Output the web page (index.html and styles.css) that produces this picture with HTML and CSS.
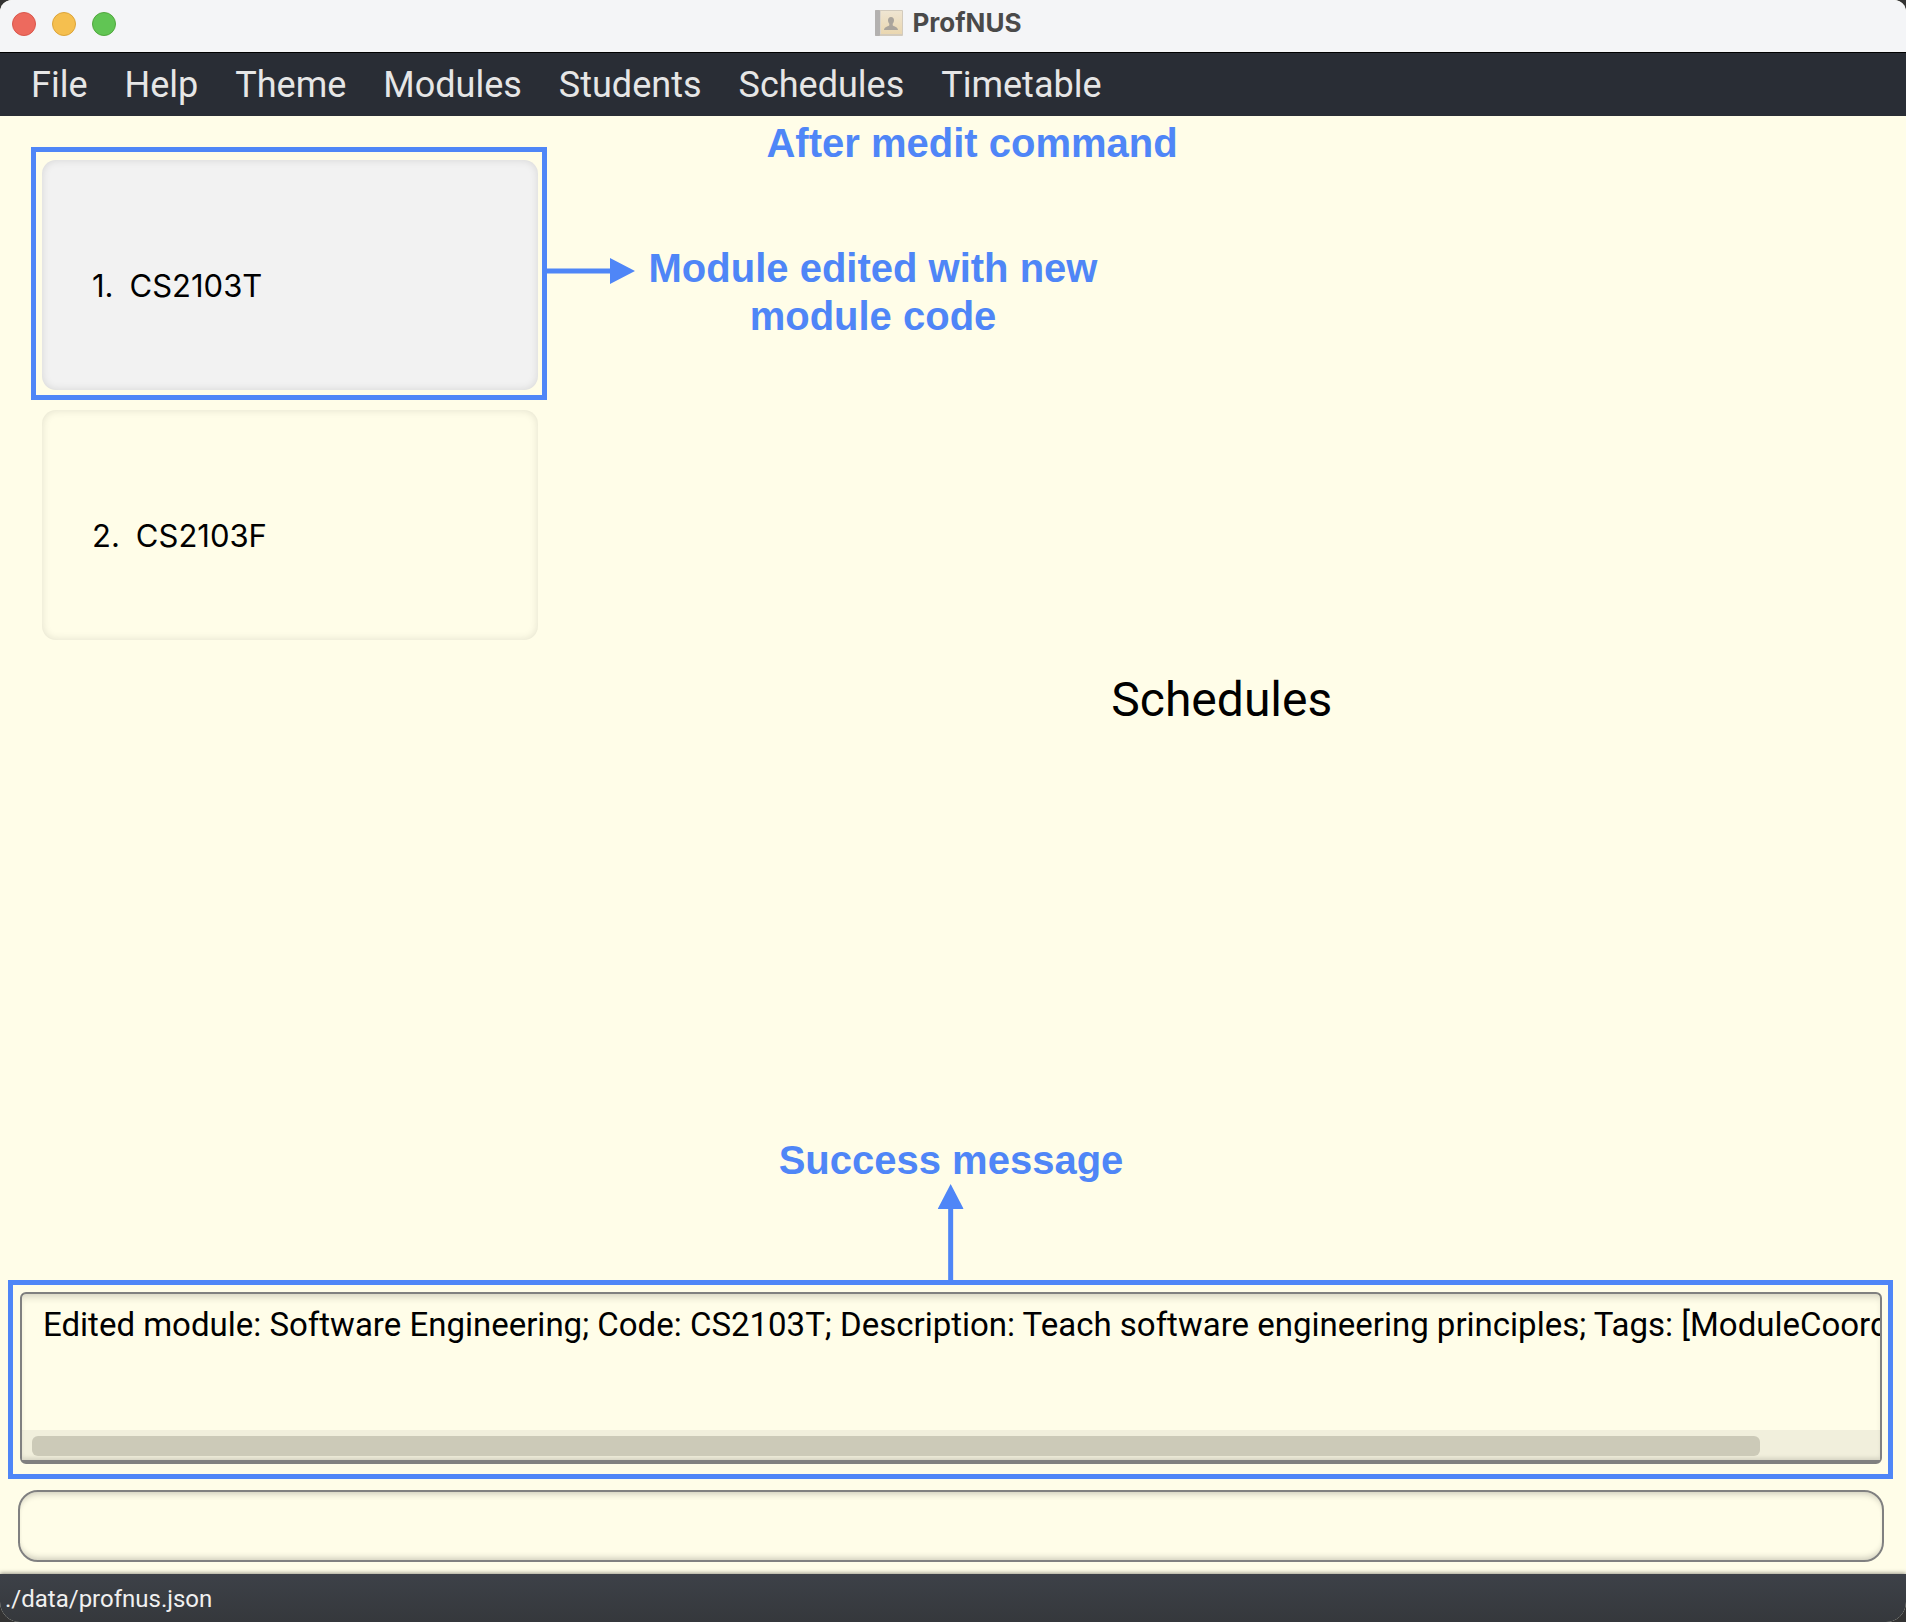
FILE: index.html
```html
<!DOCTYPE html>
<html lang="en">
<head>
<meta charset="utf-8">
<meta name="viewport" content="width=device-width, initial-scale=1">
<title>ProfNUS</title>
<link rel="stylesheet" href="styles.css">
</head>
<body>
<div class="window">
  <header class="titlebar">
    <div class="lights">
      <button class="light light-close" type="button" aria-label="Close"></button>
      <button class="light light-minimize" type="button" aria-label="Minimize"></button>
      <button class="light light-zoom" type="button" aria-label="Zoom"></button>
    </div>
    <div class="title">
      <svg class="title-icon" width="28" height="28" viewBox="0 0 28 28" aria-hidden="true">
        <defs>
          <linearGradient id="cover" x1="0" y1="0" x2="0" y2="1">
            <stop offset="0" stop-color="#efe5d2"/>
            <stop offset="1" stop-color="#ead7b0"/>
          </linearGradient>
        </defs>
        <rect x="0" y="1" width="28" height="26" rx="1" fill="#d3cbbd"/>
        <rect x="0" y="1" width="5" height="26" rx="1" fill="#b3b1b0"/>
        <rect x="5" y="2" width="22" height="23" fill="url(#cover)"/>
        <rect x="5" y="2" width="1" height="23" fill="#dcd6cb"/>
        <path d="M16 8c2 0 3 1.300 3 3.200 0 1.600-.6 2.600-1.300 3.500v1.500c0 1 5.300 1.300 5.300 4.800H9c0-3.500 5.300-3.800 5.300-4.800v-1.500C13.600 13.800 13 12.800 13 11.200 13 9.300 14 8 16 8z" fill="#aaa49c"/>
      </svg>
      <h1 class="title-text">ProfNUS</h1>
    </div>
  </header>

  <nav class="menubar" aria-label="Main menu">
    <button class="menu" type="button">File</button>
    <button class="menu" type="button">Help</button>
    <button class="menu" type="button">Theme</button>
    <button class="menu" type="button">Modules</button>
    <button class="menu" type="button">Students</button>
    <button class="menu" type="button">Schedules</button>
    <button class="menu" type="button">Timetable</button>
  </nav>

  <main class="content">
    <p class="note note-heading">After medit command</p>
    <ol class="modules">
      <li class="card card-selected">
        <span>1.</span><span>CS2103T</span>
        <div class="highlight highlight-card"></div>
        <div class="callout callout-card">
          <svg width="88" height="26" viewBox="0 0 88 26" aria-hidden="true">
            <path d="M0 10.500h63V0l25 13-25 13V15.500H0z" fill="#4f86f7"/>
          </svg>
          <p class="note">Module edited with new<br>module code</p>
        </div>
      </li>
      <li class="card">
        <span>2.</span><span>CS2103F</span>
      </li>
    </ol>
    <section class="panel">
      <h2 class="panel-title">Schedules</h2>
    </section>
  </main>

  <section class="result">
    <div class="highlight highlight-result"></div>
    <div class="callout callout-result">
      <p class="note">Success message</p>
      <svg width="26" height="96" viewBox="0 0 26 96" aria-hidden="true">
        <path d="M10.500 96V25H0L13 0l13 25H15.500v71z" fill="#4f86f7"/>
      </svg>
    </div>
    <textarea class="result-text" aria-label="Command result" readonly wrap="off">Edited module: Software Engineering; Code: CS2103T; Description: Teach software engineering principles; Tags: [ModuleCoord</textarea>
    <div class="scrollbar"><div class="scroll-thumb"></div></div>
  </section>

  <form class="command">
    <input class="command-input" type="text" aria-label="Command">
  </form>

  <footer class="statusbar">./data/profnus.json</footer>
</div>
</body>
</html>
```
FILE: styles.css
```css
:root {
  --cream: #fffde8;
  --blue: #4f86f7;
  --grey: #808080;
  --ui: Roboto, "Liberation Sans", sans-serif;
}

* {
  box-sizing: border-box;
}

body {
  margin: 0;
  background: #333;
  color: #000;
  font-family: var(--ui);
}

.window {
  display: flex;
  flex-direction: column;
  min-height: 100vh;
  overflow: hidden;
  border-radius: 12px 12px 20px 20px;
  background: var(--cream);
}

/* Title bar */
.titlebar {
  display: grid;
  grid-template-columns: 1fr auto 1fr;
  align-items: center;
  height: 52px;
  padding: 0 12px 4px;
  background: #f4f5f7;
}

.lights {
  display: flex;
  gap: 16px;
}

.light {
  width: 24px;
  height: 24px;
  padding: 0;
  border: 1px solid;
  border-radius: 50%;
}

.light-close {
  background: #ed6a5e;
  border-color: #d9574c;
}

.light-minimize {
  background: #f5bf4f;
  border-color: #dba43a;
}

.light-zoom {
  background: #61c554;
  border-color: #51a73e;
}

.title {
  display: flex;
  align-items: center;
  gap: 10px;
  height: 44px;
  padding: 0 10px 2px 0;
}

.title-text {
  margin: 0;
  color: #4a4a4a;
  font: bold 26px/32px Inter, sans-serif;
}

/* Menu bar */
.menubar {
  display: flex;
  gap: 1px;
  height: 64px;
  padding: 0 13px;
  border-top: 1px solid #000;
  background: #292d35;
}

.menu {
  padding: 0 18px;
  border: 0;
  background: none;
  color: #e6e6e6;
  font: 36px/64px var(--ui);
}

/* Module list and panel */
.content {
  position: relative;
  display: flex;
  flex: 1;
}

.modules {
  display: flex;
  flex-direction: column;
  gap: 20px;
  width: 26%;
  margin: 0 0 0 42px;
  padding: 44px 0 0;
  list-style: none;
}

.card {
  position: relative;
  display: flex;
  align-items: center;
  gap: 16px;
  height: 230px;
  padding: 22px 50px 0;
  border-radius: 14px;
  box-shadow: inset 0 0 8px rgba(0, 0, 0, 0.12);
  font: 31px/36px Inter, sans-serif;
}

.card-selected {
  background: #f2f2f2;
}

.panel {
  display: flex;
  flex: 1;
  align-items: center;
  justify-content: center;
  padding-bottom: 8px;
}

.panel-title {
  margin: 0;
  font: 48px/56px var(--ui);
}

/* Annotations */
.note {
  margin: 0;
  color: var(--blue);
  font: bold 40px/48px "Liberation Sans", Arial, sans-serif;
  text-align: center;
  white-space: nowrap;
}

.note-heading {
  position: absolute;
  top: 3px;
  left: 51%;
  transform: translateX(-50%);
}

.highlight {
  position: absolute;
  border: 5px solid var(--blue);
  pointer-events: none;
}

.highlight-card {
  inset: -13px -9px -10px -11px;
}

.callout {
  position: absolute;
  display: flex;
  align-items: center;
}

.callout-card {
  top: 84px;
  left: calc(100% + 9px);
  align-items: flex-start;
  gap: 14px;
}

.callout-card svg {
  flex: none;
  margin-top: 14px;
}

.highlight-result {
  inset: -14px -13px -19px -14px;
}

.callout-result {
  bottom: calc(100% + 14px);
  left: 50%;
  flex-direction: column;
  transform: translateX(-50%);
}

/* Command result */
.result {
  position: relative;
  height: 172px;
  margin: 0 24px 26px 20px;
  border: 2px solid var(--grey);
  border-bottom-width: 4px;
  border-radius: 6px;
}

.result-text {
  display: block;
  width: 100%;
  height: 136px;
  padding: 11px 0 0 21px;
  overflow: hidden;
  border: 0;
  outline: 0;
  resize: none;
  background: none;
  box-shadow: inset 0 6px 8px -4px rgba(0, 0, 0, 0.2);
  color: #000;
  font: 33px/40px var(--ui);
}

.scrollbar {
  height: 30px;
  padding: 6px 10px 4px;
  background: #f1efdc;
  box-shadow: inset 0 -3px 4px -1px rgba(0, 0, 0, 0.12);
}

.scroll-thumb {
  width: 94%;
  height: 20px;
  border-radius: 6px;
  background: #cccab8;
}

/* Command box */
.command {
  margin: 0 22px 12px 18px;
}

.command-input {
  display: block;
  width: 100%;
  height: 72px;
  padding: 0 20px;
  border: 2px solid var(--grey);
  border-radius: 20px;
  outline: 0;
  background: var(--cream);
  box-shadow: inset 0 6px 6px -4px rgba(0, 0, 0, 0.2), inset 0 -6px 6px -4px rgba(0, 0, 0, 0.2);
  font: 33px/40px var(--ui);
}

/* Status bar */
.statusbar {
  height: 48px;
  padding: 0 5px;
  background: linear-gradient(#3d4148, #35383c);
  box-shadow: 0 -1px 4px rgba(0, 0, 0, 0.4);
  color: #f0f0f0;
  font: 24px/50px var(--ui);
}
```
